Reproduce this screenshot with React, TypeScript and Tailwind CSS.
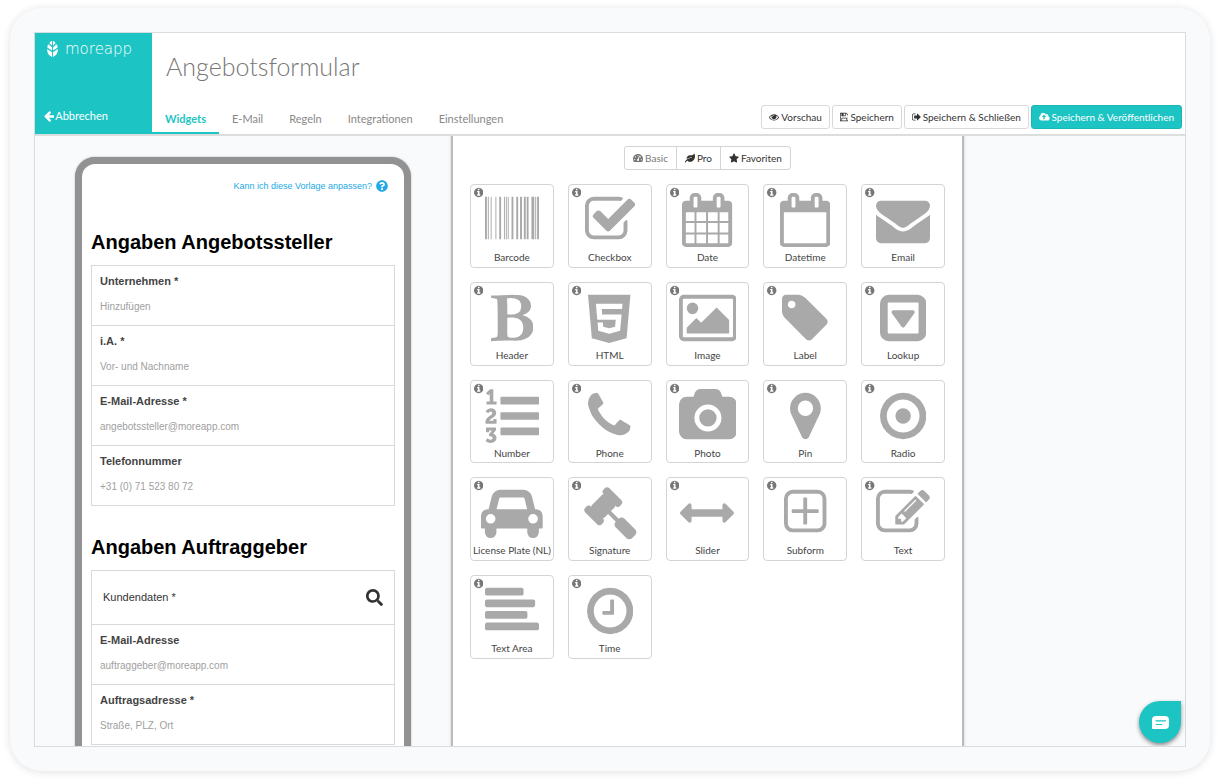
import type { ReactNode } from "react";
import { FaLeaf, FaQuestionCircle, FaSearch, FaStar, FaTachometerAlt } from "react-icons/fa";

type GlyphData = { w: number; d: string };

const RING =
  "M1536 640q0 -209 -103 -385.5t-279.5 -279.5t-385.5 -103t-385.5 103t-279.5 279.5t-103 385.5t103 385.5t279.5 279.5t385.5 103t385.5 -103t279.5 -279.5t103 -385.5z";

const bar = (x: number, y: number, w: number) =>
  `M${x} ${y + 32}v192q0 13 9.5 22.5t22.5 9.5h${w - 64}q13 0 22.5 -9.5t9.5 -22.5v-192q0 -13 -9.5 -22.5t-22.5 -9.5h-${w - 64}q-13 0 -22.5 9.5t-9.5 22.5z`;

const line = (y: number, w: number) =>
  `M0 ${y + 64}v128q0 26 19 45t45 19h${w - 128}q26 0 45 -19t19 -45v-128q0 -26 -19 -45t-45 -19h-${w - 128}q-26 0 -45 19t-19 45z`;

const stripes = [
  [0, 63], [94, 32], [189, 31], [346, 31], [472, 62], [629, 31], [692, 31], [755, 31],
  [880, 63], [1037, 63], [1163, 63], [1289, 63], [1383, 63], [1541, 94], [1666, 32], [1729, 63],
]
  .map(([x, w]) => `M${x} 0h${w}v1408h-${w}z`)
  .join("");

// Glyph outlines on a 1792-unit em with the y axis pointing up.
const glyphs = {
  barcode: { w: 1792, d: stripes },
  checkbox: {
    w: 1664,
    d: "M1408 606v-318q0 -119 -84.5 -203.5t-203.5 -84.5h-832q-119 0 -203.5 84.5t-84.5 203.5v832q0 119 84.5 203.5t203.5 84.5h832q63 0 117 -25q15 -7 18 -23q3 -17 -9 -29l-49 -49q-10 -10 -23 -10q-3 0 -9 2q-23 6 -45 6h-832q-66 0 -113 -47t-47 -113v-832q0 -66 47 -113t113 -47h832q66 0 113 47t47 113v254q0 13 9 22l64 64q10 10 23 10q6 0 12 -3q20 -8 20 -29zM1639 1095l-814 -814q-24 -24 -57 -24t-57 24l-430 430q-24 24 -24 57t24 57l110 110q24 24 57 24t57 -24l263 -263l647 647q24 24 57 24t57 -24l110 -110q24 -24 24 -57t-24 -57z",
  },
  date: {
    w: 1664,
    d: "M128 -128h288v288h-288v-288zM480 -128h320v288h-320v-288zM128 224h288v320h-288v-320zM480 224h320v320h-320v-320zM128 608h288v288h-288v-288zM864 -128h320v288h-320v-288zM480 608h320v288h-320v-288zM1248 -128h288v288h-288v-288zM864 224h320v320h-320v-320zM512 1088v288q0 13 -9.5 22.5t-22.5 9.5h-64q-13 0 -22.5 -9.5t-9.5 -22.5v-288q0 -13 9.5 -22.5t22.5 -9.5h64q13 0 22.5 9.5t9.5 22.5zM1248 224h288v320h-288v-320zM864 608h320v288h-320v-288zM1248 608h288v288h-288v-288zM1280 1088v288q0 13 -9.5 22.5t-22.5 9.5h-64q-13 0 -22.5 -9.5t-9.5 -22.5v-288q0 -13 9.5 -22.5t22.5 -9.5h64q13 0 22.5 9.5t9.5 22.5zM1664 1152v-1280q0 -52 -38 -90t-90 -38h-1408q-52 0 -90 38t-38 90v1280q0 52 38 90t90 38h128v96q0 66 47 113t113 47h64q66 0 113 -47t47 -113v-96h384v96q0 66 47 113t113 47h64q66 0 113 -47t47 -113v-96h128q52 0 90 -38t38 -90z",
  },
  datetime: {
    w: 1664,
    d: "M128 -128h1408v1024h-1408v-1024zM512 1088v288q0 14 -9 23t-23 9h-64q-14 0 -23 -9t-9 -23v-288q0 -14 9 -23t23 -9h64q14 0 23 9t9 23zM1280 1088v288q0 14 -9 23t-23 9h-64q-14 0 -23 -9t-9 -23v-288q0 -14 9 -23t23 -9h64q14 0 23 9t9 23zM1664 1152v-1280q0 -52 -38 -90t-90 -38h-1408q-52 0 -90 38t-38 90v1280q0 52 38 90t90 38h128v96q0 66 47 113t113 47h64q66 0 113 -47t47 -113v-96h384v96q0 66 47 113t113 47h64q66 0 113 -47t47 -113v-96h128q52 0 90 -38t38 -90z",
  },
  email: {
    w: 1792,
    d: "M1792 826v-794q0 -66 -47 -113t-113 -47h-1472q-66 0 -113 47t-47 113v794q44 -49 101 -87q362 -246 497 -345q57 -42 92.5 -65.5t94.5 -48t110 -24.500h2q51 0 110 24.500t94.5 48t92.5 65.500q170 123 498 345q57 39 100 87zM1792 1120q0 -79 -49 -151t-122 -123q-376 -261 -468 -325q-10 -7 -42.5 -31t-54 -38.5t-52 -32.5t-57.5 -27t-50 -9h-2q-23 0 -50 9t-57.5 27t-52 32.5t-54 38.5t-42.5 31q-91 64 -262 182.5t-205 142.5q-62 42 -117 115.5t-55 136.5q0 78 41.5 130t118.5 52h1472q65 0 112.5 -47t47.5 -113z",
  },
  header: {
    w: 1408,
    d: "M555 15q74 -32 140 -32q376 0 376 335q0 114 -41 180q-27 44 -61.5 74t-67.5 46.5t-80.5 25t-84 10.5t-94.5 2q-73 0 -101 -10q0 -53 -0.5 -159t-0.5 -158q0 -8 -1 -67.5t-0.5 -96.5t4.5 -83.5t12 -66.5zM541 761q42 -7 109 -7q82 0 143 13t110 44.5t74.5 89.5t25.5 142q0 70 -29 122.5t-79 82t-108 43.5t-124 14q-50 0 -130 -13q0 -50 4 -151t4 -152q0 -27 -0.5 -80t-0.5 -79q0 -46 1 -69zM0 -128l2 94q15 4 85 16t106 27q7 12 12.5 27t8.5 33.5t5.5 32.5t3 37.5t0.5 34v65.5q0 982 -22 1025q-4 8 -22 14.5t-44.5 11t-49.5 7t-48.5 4.5t-30.5 3l-4 83q98 2 340 11.5t373 9.5q23 0 68.5 -0.500t67.5 -0.5q70 0 136.5 -13t128.5 -42t108 -71t74 -104.5t28 -137.5q0 -52 -16.5 -95.5t-39 -72t-64.5 -57.5t-73 -45t-84 -40q154 -35 256.5 -134t102.5 -248q0 -100 -35 -179.5t-93.5 -130.5t-138 -85.5t-163.5 -48.5t-176 -14q-44 0 -132 3t-132 3q-106 0 -307 -11t-231 -12z",
  },
  html: {
    w: 1408,
    d: "M1130 939l16 175h-884l47 -534h612l-22 -228l-197 -53l-196 53l-13 140h-175l22 -278l362 -100h4v1l359 99l50 544h-644l-15 181h674zM0 1408h1408l-128 -1438l-578 -162l-574 162z",
  },
  image: {
    w: 1920,
    d: "M640 960q0 -80 -56 -136t-136 -56t-136 56t-56 136t56 136t136 56t136 -56t56 -136zM1664 576v-448h-1408v192l320 320l160 -160l512 512zM1760 1280h-1600q-13 0 -22.5 -9.5t-9.5 -22.5v-1216q0 -13 9.5 -22.5t22.5 -9.5h1600q13 0 22.5 9.5t9.5 22.5v1216q0 13 -9.5 22.5t-22.5 9.5zM1920 1248v-1216q0 -66 -47 -113t-113 -47h-1600q-66 0 -113 47t-47 113v1216q0 66 47 113t113 47h1600q66 0 113 -47t47 -113z",
  },
  label: {
    w: 1536,
    d: "M448 1088q0 53 -37.5 90.5t-90.5 37.5t-90.5 -37.5t-37.5 -90.5t37.5 -90.5t90.5 -37.5t90.5 37.5t37.5 90.5zM1515 512q0 -53 -37 -90l-491 -492q-39 -37 -91 -37q-53 0 -90 37l-715 716q-38 37 -64.5 101t-26.5 117v416q0 52 38 90t90 38h416q53 0 117 -26.5t102 -64.5l715 -714q37 -39 37 -91z",
  },
  lookup: {
    w: 1536,
    d: "M1145 861q18 -35 -5 -66l-320 -448q-19 -27 -52 -27t-52 27l-320 448q-23 31 -5 66q17 35 57 35h640q40 0 57 -35zM1280 160v960q0 13 -9.5 22.5t-22.5 9.5h-960q-13 0 -22.5 -9.5t-9.5 -22.5v-960q0 -13 9.5 -22.5t22.5 -9.5h960q13 0 22.5 9.5t9.5 22.5zM1536 1120v-960q0 -119 -84.5 -203.5t-203.5 -84.5h-960q-119 0 -203.5 84.5t-84.5 203.5v960q0 119 84.5 203.5t203.5 84.5h960q119 0 203.5 -84.5t84.5 -203.5z",
  },
  number: {
    w: 1792,
    d:
      "M381 -84q0 -80 -54.5 -126t-135.5 -46q-106 0 -172 66l57 88q49 -45 106 -45q29 0 50.5 14.5t21.5 42.5q0 64 -105 56l-26 56q8 10 32.5 43.5t42.5 54t37 38.5v1q-16 0 -48.5 -1t-48.5 -1v-53h-106v152h333v-88l-95 -115q51 -12 81 -49t30 -88zM383 543v-159h-362q-6 36 -6 54q0 51 23.5 93t56.5 68t66 47.5t56.5 43.5t23.5 45q0 25 -14.5 38.5t-39.5 13.5q-46 0 -81 -58l-85 59q24 51 71.5 79.5t105.5 28.5q73 0 123 -41.5t50 -112.5q0 -50 -34 -91.5t-75 -64.5t-75.5 -50.5t-35.5 -52.5h127v60h105zM384 1123v-99h-335v99h107q0 41 0.5 121.5t0.5 121.5v12h-2q-8 -17 -50 -54l-71 76l136 127h106v-404h108z" +
      bar(512, 0, 1280) + bar(512, 512, 1280) + bar(512, 1024, 1280),
  },
  phone: {
    w: 1408,
    d: "M1408 296q0 -27 -10 -70.5t-21 -68.5q-21 -50 -122 -106q-94 -51 -186 -51q-27 0 -53 3.5t-57.5 12.5t-47 14.5t-55.5 20.5t-49 18q-98 35 -175 83q-127 79 -264 216t-216 264q-48 77 -83 175q-3 9 -18 49t-20.5 55.5t-14.5 47t-12.5 57.5t-3.5 53q0 92 51 186q56 101 106 122q25 11 68.5 21t70.5 10q14 0 21 -3q18 -6 53 -76q11 -19 30 -54t35 -63.5t31 -53.5q3 -4 17.5 -25t21.5 -35.5t7 -28.5q0 -20 -28.5 -50t-62 -55t-62 -53t-28.5 -46q0 -9 5 -22.5t8.5 -20.5t14 -24t11.5 -19q76 -137 174 -235t235 -174q2 -1 19 -11.5t24 -14t20.5 -8.5t22.5 -5q18 0 46 28.5t53 62t55 62t50 28.5q14 0 28.5 -7t35.5 -21.5t25 -17.5q25 -15 53.5 -31t63.5 -35t54 -30q70 -35 76 -53q3 -7 3 -21z",
  },
  photo: {
    w: 1920,
    d: "M960 864q119 0 203.5 -84.5t84.5 -203.5t-84.5 -203.5t-203.5 -84.5t-203.5 84.5t-84.5 203.5t84.5 203.5t203.5 84.5zM1664 1280q106 0 181 -75t75 -181v-896q0 -106 -75 -181t-181 -75h-1408q-106 0 -181 75t-75 181v896q0 106 75 181t181 75h224l51 136q19 49 69.5 84.5t103.5 35.5h512q53 0 103.5 -35.5t69.5 -84.5l51 -136h224zM960 128q185 0 316.5 131.5t131.5 316.5t-131.5 316.5t-316.5 131.5t-316.5 -131.5t-131.5 -316.5t131.5 -316.5t316.5 -131.5z",
  },
  pin: {
    w: 1024,
    d: "M768 896q0 106 -75 181t-181 75t-181 -75t-75 -181t75 -181t181 -75t181 75t75 181zM1024 896q0 -109 -33 -179l-364 -774q-16 -33 -47.5 -52t-67.5 -19t-67.5 19t-46.5 52l-365 774q-33 70 -33 179q0 212 150 362t362 150t362 -150t150 -362z",
  },
  radio: {
    w: 1536,
    d: "M1024 640q0 -106 -75 -181t-181 -75t-181 75t-75 181t75 181t181 75t181 -75t75 -181zM768 1184q-148 0 -273 -73t-198 -198t-73 -273t73 -273t198 -198t273 -73t273 73t198 198t73 273t-73 273t-198 198t-273 73z" + RING,
  },
  car: {
    w: 2048,
    d: "M480 448q0 66 -47 113t-113 47t-113 -47t-47 -113t47 -113t113 -47t113 47t47 113zM516 768h1016l-89 357q-2 8 -14 17.5t-21 9.5h-768q-9 0 -21 -9.5t-14 -17.5zM1888 448q0 66 -47 113t-113 47t-113 -47t-47 -113t47 -113t113 -47t113 47t47 113zM2048 544v-384q0 -14 -9 -23t-23 -9h-96v-128q0 -80 -56 -136t-136 -56t-136 56t-56 136v128h-1024v-128q0 -80 -56 -136t-136 -56t-136 56t-56 136v128h-96q-14 0 -23 9t-9 23v384q0 93 65.5 158.5t158.5 65.5h28l105 419q23 94 104 157.5t179 63.5h768q98 0 179 -63.5t104 -157.5l105 -419h28q93 0 158.5 -65.5t65.5 -158.5z",
  },
  gavel: {
    w: 1792,
    d: "M1771 0q0 -53 -37 -90l-107 -108q-39 -37 -91 -37q-53 0 -90 37l-363 364q-38 36 -38 90q0 53 43 96l-256 256l-126 -126q-14 -14 -34 -14t-34 14q2 -2 12.5 -12t12.5 -13t10 -11.5t10 -13.5t6 -13.5t5.5 -16.5t1.5 -18q0 -38 -28 -68q-3 -3 -16.5 -18t-19 -20.5t-18.5 -16.5t-22 -15.5t-22 -9t-26 -4.5q-40 0 -68 28l-408 408q-28 28 -28 68q0 13 4.5 26t9 22t15.5 22t16.5 18.5t20.5 19t18 16.5q30 28 68 28q10 0 18 -1.5t16.5 -5.5t13.5 -6t13.5 -10t11.5 -10t13 -12.5t12 -12.5q-14 14 -14 34t14 34l348 348q14 14 34 14t34 -14q-2 2 -12.5 12t-12.5 13t-10 11.5t-10 13.5t-6 13.5t-5.5 16.5t-1.5 18q0 38 28 68q3 3 16.5 18t19 20.5t18.5 16.5t22 15.5t22 9t26 4.5q40 0 68 -28l408 -408q28 -28 28 -68q0 -13 -4.5 -26t-9 -22t-15.5 -22t-16.5 -18.5t-20.5 -19t-18 -16.5q-30 -28 -68 -28q-10 0 -18 1.5t-16.5 5.5t-13.5 6t-13.5 10t-11.5 10t-13 12.5t-12 12.5q14 -14 14 -34t-14 -34l-126 -126l256 -256q43 43 96 43q52 0 91 -37l363 -363q37 -39 37 -91z",
  },
  slider: {
    w: 1792,
    d: "M1792 640q0 -26 -19 -45l-256 -256q-19 -19 -45 -19t-45 19t-19 45v128h-1024v-128q0 -26 -19 -45t-45 -19t-45 19l-256 256q-19 19 -19 45t19 45l256 256q19 19 45 19t45 -19t19 -45v-128h1024v128q0 26 19 45t45 19t45 -19l256 -256q19 -19 19 -45z",
  },
  subform: {
    w: 1408,
    d: "M1152 736v-64q0 -14 -9 -23t-23 -9h-352v-352q0 -14 -9 -23t-23 -9h-64q-14 0 -23 9t-9 23v352h-352q-14 0 -23 9t-9 23v64q0 14 9 23t23 9h352v352q0 14 9 23t23 9h64q14 0 23 -9t9 -23v-352h352q14 0 23 -9t9 -23zM1280 288v832q0 66 -47 113t-113 47h-832q-66 0 -113 -47t-47 -113v-832q0 -66 47 -113t113 -47h832q66 0 113 47t47 113zM1408 1120v-832q0 -119 -84.5 -203.5t-203.5 -84.5h-832q-119 0 -203.5 84.5t-84.5 203.5v832q0 119 84.5 203.5t203.5 84.5h832q119 0 203.5 -84.5t84.5 -203.5z",
  },
  text: {
    w: 1792,
    d: "M888 352l116 116l-152 152l-116 -116v-56h96v-96h56zM1328 1072q-16 16 -33 -1l-350 -350q-17 -17 -1 -33t33 1l350 350q17 17 1 33zM1408 478v-190q0 -119 -84.5 -203.5t-203.5 -84.5h-832q-119 0 -203.5 84.5t-84.5 203.5v832q0 119 84.5 203.5t203.5 84.5h832q63 0 117 -25q15 -7 18 -23q3 -17 -9 -29l-49 -49q-14 -14 -32 -8q-23 6 -45 6h-832q-66 0 -113 -47t-47 -113v-832q0 -66 47 -113t113 -47h832q66 0 113 47t47 113v126q0 13 9 22l64 64q15 15 35 7t20 -29zM1312 1216l288 -288l-672 -672h-288v288zM1756 1084l-92 -92l-288 288l92 92q28 28 68 28t68 -28l152 -152q28 -28 28 -68t-28 -68z",
  },
  textArea: {
    w: 1792,
    d: line(0, 1792) + line(384, 1408) + line(768, 1664) + line(1152, 1280),
  },
  time: {
    w: 1536,
    d: "M896 992v-448q0 -14 -9 -23t-23 -9h-320q-14 0 -23 9t-9 23v64q0 14 9 23t23 9h224v352q0 14 9 23t23 9h64q14 0 23 -9t9 -23zM1312 640q0 148 -73 273t-198 198t-273 73t-273 -73t-198 -198t-73 -273t73 -273t198 -198t273 -73t273 73t198 198t73 273z" + RING,
  },
  info: {
    w: 1536,
    d: "M1024 160v160q0 14 -9 23t-23 9h-96v512q0 14 -9 23t-23 9h-320q-14 0 -23 -9t-9 -23v-160q0 -14 9 -23t23 -9h96v-320h-96q-14 0 -23 -9t-9 -23v-160q0 -14 9 -23t23 -9h448q14 0 23 9t9 23zM896 1056v160q0 14 -9 23t-23 9h-192q-14 0 -23 -9t-9 -23v-160q0 -14 9 -23t23 -9h192q14 0 23 9t9 23z" + RING,
  },
  arrowLeft: {
    w: 1536,
    d: "M1536 640v-128q0 -53 -32.5 -90.5t-84.5 -37.5h-704l293 -294q38 -36 38 -90t-38 -90l-75 -76q-37 -37 -90 -37q-52 0 -91 37l-651 652q-37 37 -37 90q0 52 37 91l651 650q38 38 91 38q52 0 90 -38l75 -74q38 -38 38 -91t-38 -91l-293 -293h704q52 0 84.5 -37.5t32.5 -90.5z",
  },
  eye: {
    w: 1792,
    d: "M1664 576q-152 236 -381 353q61 -104 61 -225q0 -185 -131.5 -316.5t-316.5 -131.5t-316.5 131.5t-131.5 316.5q0 121 61 225q-229 -117 -381 -353q133 -205 333.5 -326.5t434.5 -121.5t434.5 121.5t333.5 326.5zM944 960q0 20 -14 34t-34 14q-125 0 -214.5 -89.5t-89.5 -214.5q0 -20 14 -34t34 -14t34 14t14 34q0 86 61 147t147 61q20 0 34 14t14 34zM1792 576q0 -34 -20 -69q-140 -230 -376.5 -368.5t-499.5 -138.5t-499.5 139t-376.5 368q-20 35 -20 69t20 69q140 229 376.5 368t499.5 139t499.5 -139t376.5 -368q20 -35 20 -69z",
  },
  save: {
    w: 1536,
    d: "M384 0h768v384h-768v-384zM1280 0h128v896q0 14 -10 38.5t-20 34.5l-281 281q-10 10 -34 20t-39 10v-416q0 -40 -28 -68t-68 -28h-576q-40 0 -68 28t-28 68v416h-128v-1280h128v416q0 40 28 68t68 28h832q40 0 68 -28t28 -68v-416zM896 928v320q0 13 -9.5 22.5t-22.5 9.5h-192q-13 0 -22.5 -9.5t-9.5 -22.5v-320q0 -13 9.5 -22.5t22.5 -9.5h192q13 0 22.5 9.5t9.5 22.5zM1536 896v-928q0 -40 -28 -68t-68 -28h-1344q-40 0 -68 28t-28 68v1344q0 40 28 68t68 28h928q40 0 88 -20t76 -48l280 -280q28 -28 48 -76t20 -88z",
  },
  signOut: {
    w: 1568,
    d: "M640 96q0 -4 1 -20t0.5 -26.5t-3 -23.5t-10 -19.5t-20.5 -6.5h-320q-119 0 -203.5 84.5t-84.5 203.5v704q0 119 84.5 203.5t203.5 84.5h320q13 0 22.5 -9.5t9.5 -22.5q0 -4 1 -20t0.5 -26.5t-3 -23.5t-10 -19.5t-20.5 -6.5h-320q-66 0 -113 -47t-47 -113v-704q0 -66 47 -113t113 -47h312q40 0 40 -32zM1568 640q0 -26 -19 -45l-544 -544q-19 -19 -45 -19t-45 19t-19 45v288h-448q-26 0 -45 19t-19 45v384q0 26 19 45t45 19h448v288q0 26 19 45t45 19t45 -19l544 -544q19 -19 19 -45z",
  },
  cloudUpload: {
    w: 1920,
    d: "M1280 672q0 14 -9 23l-352 352q-9 9 -23 9t-23 -9l-351 -351q-10 -12 -10 -24q0 -14 9 -23t23 -9h224v-352q0 -13 9.5 -22.5t22.5 -9.5h192q13 0 22.5 9.5t9.5 22.5v352h224q13 0 22.5 9.5t9.5 22.5zM1920 384q0 -159 -112.5 -271.5t-271.5 -112.5h-1088q-185 0 -316.5 131.5t-131.5 316.5q0 130 70 240t188 165q-2 30 -2 43q0 212 150 362t362 150q156 0 285.5 -87t188.5 -231q71 62 166 62q106 0 181 -75t75 -181q0 -76 -41 -138q130 -31 213.5 -135.5t83.5 -238.5z",
  },
} satisfies Record<string, GlyphData>;

type GlyphName = keyof typeof glyphs;

function Glyph({ name, className }: { name: GlyphName; className: string }) {
  const { w, d } = glyphs[name];
  return (
    <svg viewBox={`0 0 ${w} 1792`} className={className} fill="currentColor" fillRule="evenodd" aria-hidden="true">
      <path d={d} transform="translate(0 1536) scale(1 -1)" />
    </svg>
  );
}

const widgets: { icon: GlyphName; label: string }[] = [
  { icon: "barcode", label: "Barcode" },
  { icon: "checkbox", label: "Checkbox" },
  { icon: "date", label: "Date" },
  { icon: "datetime", label: "Datetime" },
  { icon: "email", label: "Email" },
  { icon: "header", label: "Header" },
  { icon: "html", label: "HTML" },
  { icon: "image", label: "Image" },
  { icon: "label", label: "Label" },
  { icon: "lookup", label: "Lookup" },
  { icon: "number", label: "Number" },
  { icon: "phone", label: "Phone" },
  { icon: "photo", label: "Photo" },
  { icon: "pin", label: "Pin" },
  { icon: "radio", label: "Radio" },
  { icon: "car", label: "License Plate (NL)" },
  { icon: "gavel", label: "Signature" },
  { icon: "slider", label: "Slider" },
  { icon: "subform", label: "Subform" },
  { icon: "text", label: "Text" },
  { icon: "textArea", label: "Text Area" },
  { icon: "time", label: "Time" },
];

const tabs = ["Widgets", "E-Mail", "Regeln", "Integrationen", "Einstellungen"];

function Logo() {
  return (
    <div className="flex items-center gap-[7px] text-white">
      <svg viewBox="0 0 24 35" className="h-4 w-[11px]" fill="currentColor" aria-hidden="true">
        <path d="M11 0C8 .5 6 2.500 5.500 5.500L11 10zM13 0c3 .5 5 2.500 5.500 5.500L13 10z" />
        <path d="M3.500 7C1 9 .5 11.500 1.200 14.500L11 21v-7zM20.500 7c2.500 2 3 4.500 2.300 7.500L13 21v-7z" />
        <path d="M.5 17.500C-.5 25 3.500 32 11 35V24.500zM23.500 17.500C24.500 25 20.500 32 13 35V24.500z" />
      </svg>
      <span className="font-['DejaVu_Sans',sans-serif] text-[15px] font-extralight leading-4">moreapp</span>
    </div>
  );
}

function ActionButton({ icon, children, primary = false }: { icon: GlyphName; children: ReactNode; primary?: boolean }) {
  return (
    <button
      type="button"
      className={
        primary
          ? "flex h-6 items-center gap-0.5 rounded-[3px] border border-[#1ab5b5] bg-[#1dc4c4] px-[7px] text-[10px] text-white"
          : "flex h-6 items-center gap-0.5 rounded-[3px] border border-[#d9d9d9] bg-white px-[7px] text-[10px] text-[#333]"
      }
    >
      <Glyph name={icon} className="h-2.5 w-auto" />
      {children}
    </button>
  );
}

function Field({ id, label, placeholder }: { id: string; label: string; placeholder: string }) {
  return (
    <div className="flex h-[60px] flex-col gap-3 border-b border-[#d9d9d9] px-2 pt-[7px]">
      <label htmlFor={id} className="text-[11px] font-bold leading-4 text-[#444]">
        {label}
      </label>
      <input id={id} placeholder={placeholder} className="w-full text-[10px] leading-3 outline-none placeholder:text-[#a0a0a0]" />
    </div>
  );
}

function PhonePreview() {
  return (
    <section className="mx-auto mt-[21px] h-[760px] w-[336px] rounded-[20px] border-[7px] border-[#929292] bg-white px-[9px] font-['Liberation_Sans',Arial,sans-serif] shadow-[0_0_2px_#aaa]">
      <a href="#hilfe" className="mr-[7px] flex items-center justify-end gap-1 pt-4 text-[9px] leading-3 text-[#24a9e6]">
        Kann ich diese Vorlage anpassen?
        <FaQuestionCircle className="size-3" />
      </a>
      <h2 className="mt-[38px] text-[20px] font-bold leading-6 text-black">Angaben Angebotssteller</h2>
      <div className="mt-[11px] border border-b-0 border-[#d9d9d9]">
        <Field id="unternehmen" label="Unternehmen *" placeholder="Hinzufügen" />
        <Field id="ia" label="i.A. *" placeholder="Vor- und Nachname" />
        <Field id="mail" label="E-Mail-Adresse *" placeholder="angebotssteller@moreapp.com" />
        <Field id="telefon" label="Telefonnummer" placeholder="+31 (0) 71 523 80 72" />
      </div>
      <h2 className="mt-[29px] text-[20px] font-bold leading-6 text-black">Angaben Auftraggeber</h2>
      <div className="mt-[11px] border border-b-0 border-[#d9d9d9]">
        <button type="button" className="flex h-[54px] w-full items-center justify-between border-b border-[#d9d9d9] px-[11px] text-[11px] text-[#333]">
          Kundendaten *
          <FaSearch className="size-[17px]" />
        </button>
        <Field id="mail2" label="E-Mail-Adresse" placeholder="auftraggeber@moreapp.com" />
        <Field id="adresse" label="Auftragsadresse *" placeholder="Straße, PLZ, Ort" />
      </div>
    </section>
  );
}

function WidgetCard({ icon, label }: { icon: GlyphName; label: string }) {
  return (
    <button
      type="button"
      className="relative flex aspect-square flex-col items-center rounded-[4px] border border-[#d4d4d4] bg-white pt-2 text-[#a9a9a9]"
    >
      <Glyph name="info" className="absolute left-[3px] top-0.5 h-[11px] w-auto text-[#777]" />
      <Glyph name={icon} className="h-[54px] w-auto" />
      <span className="mt-0.5 whitespace-nowrap text-[10px] leading-4 text-[#444]">{label}</span>
    </button>
  );
}

export default function App() {
  return (
    <div className="flex h-screen bg-white px-2.5 pb-3 pt-2 font-['Lato',sans-serif]">
      <div className="flex min-w-0 flex-1 rounded-[32px] bg-[#f9fafc] p-6 shadow-[0_1px_8px_rgba(0,0,0,0.12)]">
        <div className="relative flex min-w-0 flex-1 flex-col overflow-hidden border border-[#d9dcdf]">
          <header className="flex h-[103px] shrink-0 border-b-2 border-[#dcdddd] bg-white">
            <div className="flex w-[117px] flex-col justify-between bg-[#1dc4c4] pb-2.5 pl-3 pt-2">
              <Logo />
              <a href="#zurueck" className="flex items-center gap-px text-[11px] leading-4 text-white">
                <Glyph name="arrowLeft" className="-ml-[3px] h-3 w-auto" />
                Abbrechen
              </a>
            </div>
            <div className="flex min-w-0 flex-1 flex-col justify-between pr-[3px]">
              <h1 className="pl-3.5 pt-[15px] text-[25px] font-light leading-9 text-[#777]">Angebotsformular</h1>
              <div className="flex items-end justify-between">
                <nav className="flex">
                  {tabs.map((tab, i) => (
                    <a
                      key={tab}
                      href={`#${tab}`}
                      className={
                        i === 0
                          ? "border-b-2 border-[#1dc4c4] px-[13px] pb-[5px] text-[11px] font-bold leading-4 text-[#1dc4c4]"
                          : "border-b-2 border-transparent px-[13px] pb-[5px] text-[11px] leading-4 text-[#888]"
                      }
                    >
                      {tab}
                    </a>
                  ))}
                </nav>
                <div className="mb-[5px] flex gap-0.5">
                  <ActionButton icon="eye">Vorschau</ActionButton>
                  <ActionButton icon="save">Speichern</ActionButton>
                  <ActionButton icon="signOut">Speichern &amp; Schließen</ActionButton>
                  <ActionButton icon="cloudUpload" primary>
                    Speichern &amp; Veröffentlichen
                  </ActionButton>
                </div>
              </div>
            </div>
          </header>

          <main className="grid min-h-0 flex-1 grid-cols-[416fr_513fr_221fr] overflow-hidden">
            <PhonePreview />
            <section className="border-x-2 border-[#b9bcbc] bg-white px-[17px] pt-2.5 shadow-[0_0_3px_#ccc]">
              <div className="flex justify-center">
                <div className="flex h-6 overflow-hidden rounded-[3px] border border-[#d4d4d4] text-[10px] text-[#333]">
                  <button type="button" className="flex items-center gap-0.5 px-2 text-[#777]">
                    <FaTachometerAlt className="size-2.5" />
                    Basic
                  </button>
                  <button type="button" className="flex items-center gap-0.5 border-x border-[#d4d4d4] px-2">
                    <FaLeaf className="size-2.5" />
                    Pro
                  </button>
                  <button type="button" className="flex items-center gap-0.5 px-2">
                    <FaStar className="size-2.5" />
                    Favoriten
                  </button>
                </div>
              </div>
              <div className="mt-3.5 grid grid-cols-5 gap-3.5">
                {widgets.map((w) => (
                  <WidgetCard key={w.label} icon={w.icon} label={w.label} />
                ))}
              </div>
            </section>
          </main>

          <button
            type="button"
            aria-label="Chat"
            className="absolute bottom-[3px] right-1 flex size-[42px] items-center justify-center rounded-full rounded-tr-[5px] bg-[#1dc4c4] shadow-[0_2px_4px_rgba(0,0,0,0.45)]"
          >
            <svg viewBox="0 0 17 13" className="h-[13px] w-[17px]" aria-hidden="true">
              <path d="M4 0h9a4 4 0 0 1 4 4v5a4 4 0 0 1-4 4H1a1 1 0 0 1-1-1V4a4 4 0 0 1 4-4z" fill="#fff" />
              <path d="M4 4.800h9.500M4 8.500h5.500" stroke="#1dc4c4" strokeWidth="1.200" strokeLinecap="round" />
            </svg>
          </button>
        </div>
      </div>
    </div>
  );
}
